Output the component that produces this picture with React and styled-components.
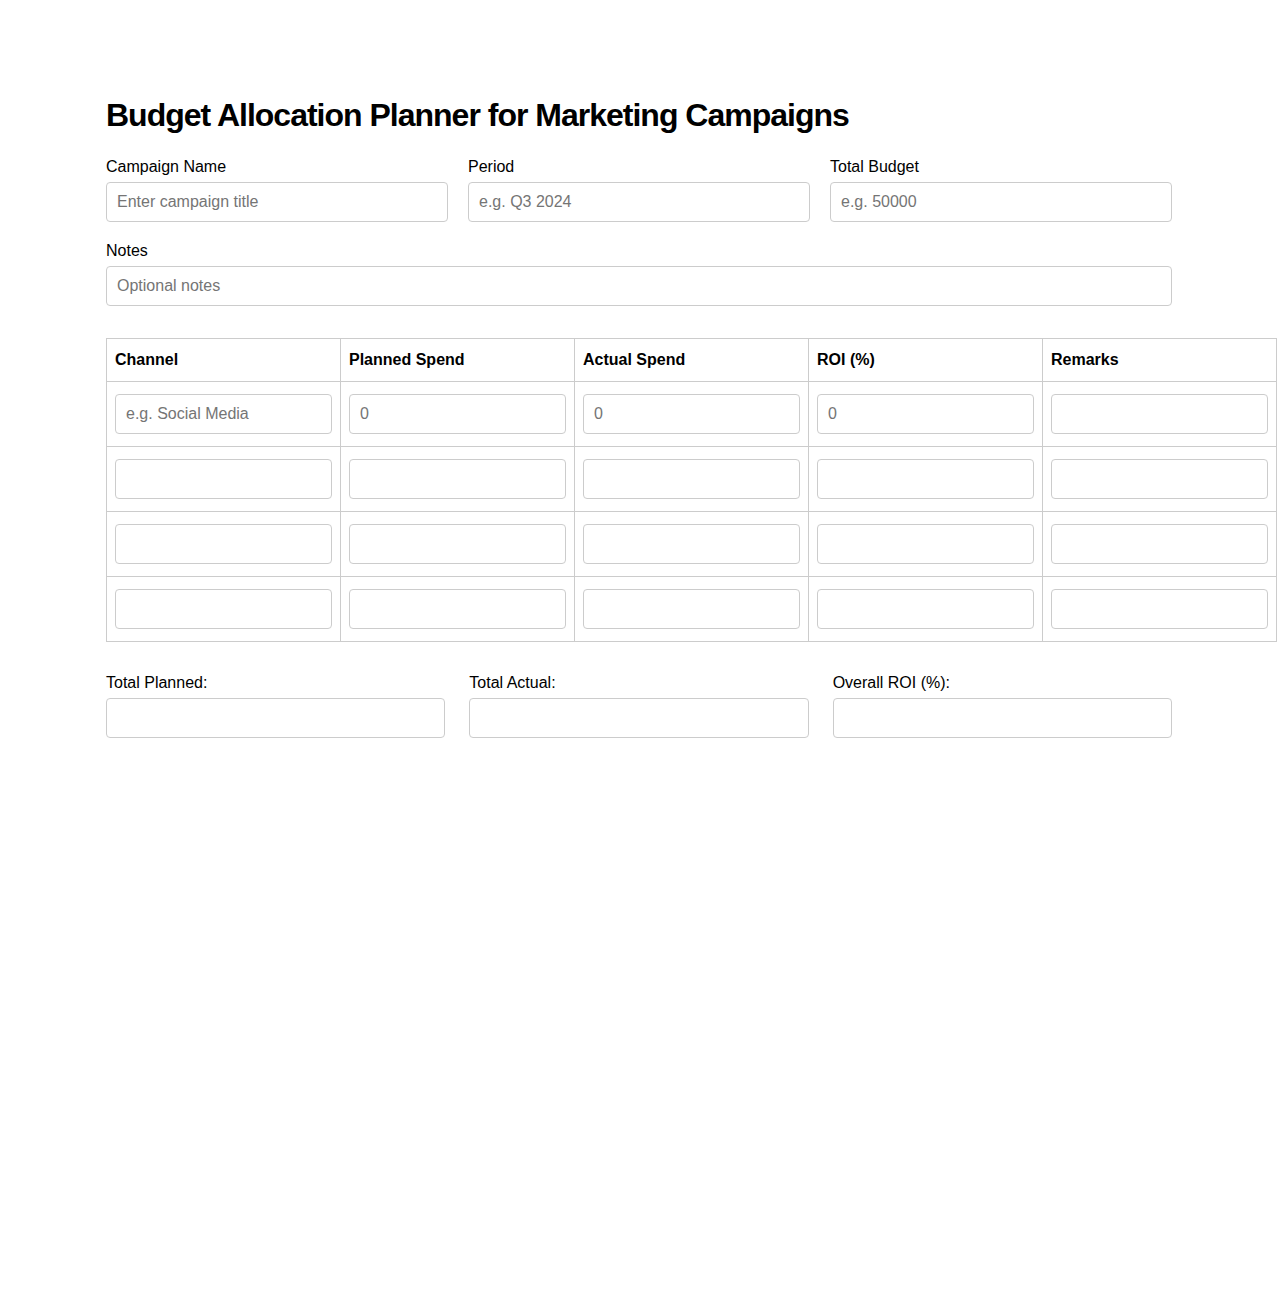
import styled, { createGlobalStyle } from "styled-components";

const GlobalStyle = createGlobalStyle`
  body {
    margin: 0;
    background: #ffffff;
    color: #000000;
    font-family: "Liberation Sans", Arial, sans-serif;
  }
`;

const Page = styled.div`
  width: 1066px;
  padding: 97px 0 60px 106px;
`;

const Title = styled.h1`
  margin: 0 0 24px;
  font-size: 32px;
  font-weight: 700;
  line-height: 37px;
  letter-spacing: -1px;
`;

const FieldRow = styled.div`
  display: grid;
  grid-template-columns: repeat(${(p) => p.cols}, 1fr);
  gap: ${(p) => p.gap}px;
  margin-bottom: ${(p) => p.bottom || 0}px;
`;

const Field = styled.label`
  display: flex;
  flex-direction: column;
  gap: 6px;
  font-size: 16px;
  line-height: 18px;
`;

const Input = styled.input`
  box-sizing: border-box;
  width: 100%;
  height: 40px;
  padding: 0 10px;
  border: 1px solid #cccccc;
  border-radius: 4px;
  font-family: inherit;
  font-size: 16px;
  color: #000;
  outline: none;

  &::placeholder {
    color: #757575;
  }
`;

const Table = styled.table`
  width: 1171px;
  table-layout: fixed;
  border-collapse: collapse;
  margin: 32px 0 32px;
`;

const Th = styled.th`
  border: 1px solid #cccccc;
  padding: 8px;
  height: 43px;
  box-sizing: border-box;
  text-align: left;
  font-size: 16px;
  font-weight: 700;
`;

const Td = styled.td`
  border: 1px solid #cccccc;
  padding: 12px 8px;
  height: 65px;
  box-sizing: border-box;
`;

const columns = ["Channel", "Planned Spend", "Actual Spend", "ROI (%)", "Remarks"];
const firstRow = ["e.g. Social Media", "0", "0", "0", ""];

export default function App() {
  return (
    <Page>
      <GlobalStyle />
      <Title>Budget Allocation Planner for Marketing Campaigns</Title>

      <FieldRow cols={3} gap={20} bottom={20}>
        <Field>
          Campaign Name
          <Input placeholder="Enter campaign title" />
        </Field>
        <Field>
          Period
          <Input placeholder="e.g. Q3 2024" />
        </Field>
        <Field>
          Total Budget
          <Input placeholder="e.g. 50000" />
        </Field>
      </FieldRow>

      <FieldRow cols={1} gap={0}>
        <Field>
          Notes
          <Input placeholder="Optional notes" />
        </Field>
      </FieldRow>

      <Table>
        <thead>
          <tr>
            {columns.map((c) => (
              <Th key={c}>{c}</Th>
            ))}
          </tr>
        </thead>
        <tbody>
          {[0, 1, 2, 3].map((r) => (
            <tr key={r}>
              {columns.map((c, i) => (
                <Td key={c}>
                  <Input placeholder={r === 0 ? firstRow[i] : ""} />
                </Td>
              ))}
            </tr>
          ))}
        </tbody>
      </Table>

      <FieldRow cols={3} gap={24}>
        <Field>
          Total Planned:
          <Input readOnly />
        </Field>
        <Field>
          Total Actual:
          <Input readOnly />
        </Field>
        <Field>
          Overall ROI (%):
          <Input readOnly />
        </Field>
      </FieldRow>
    </Page>
  );
}
